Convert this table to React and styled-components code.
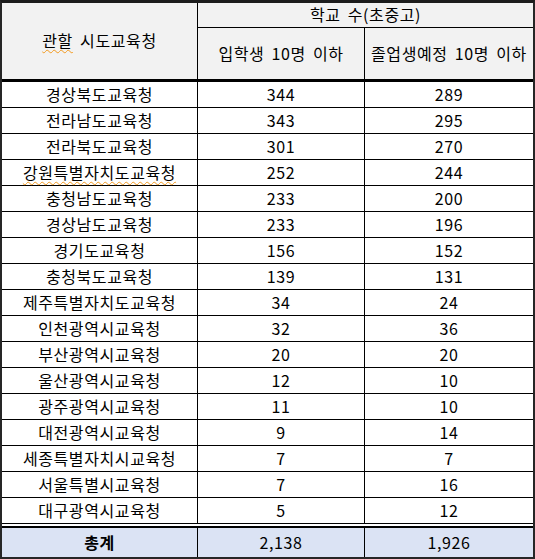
import React from "react";
import styled, { createGlobalStyle } from "styled-components";

const GlobalStyle = createGlobalStyle`
  html, body {
    margin: 0;
    padding: 0;
    background: #ffffff;
  }
  body {
    font-family: "Noto Sans CJK KR", "Noto Sans", sans-serif;
  }
`;

const rows = [
  ["경상북도교육청", "344", "289"],
  ["전라남도교육청", "343", "295"],
  ["전라북도교육청", "301", "270"],
  ["강원특별자치도교육청", "252", "244", true],
  ["충청남도교육청", "233", "200"],
  ["경상남도교육청", "233", "196"],
  ["경기도교육청", "156", "152"],
  ["충청북도교육청", "139", "131"],
  ["제주특별자치도교육청", "34", "24"],
  ["인천광역시교육청", "32", "36"],
  ["부산광역시교육청", "20", "20"],
  ["울산광역시교육청", "12", "10"],
  ["광주광역시교육청", "11", "10"],
  ["대전광역시교육청", "9", "14"],
  ["세종특별자치시교육청", "7", "7"],
  ["서울특별시교육청", "7", "16"],
  ["대구광역시교육청", "5", "12"],
];

const Frame = styled.div`
  box-sizing: border-box;
  width: 535px;
  height: 559px;
  background: #ffffff;
  border-top: 3px solid #1c1c1c;
  border-left: 2px solid #262626;
  border-right: 2px solid #262626;
  border-bottom: 2px solid #262626;
  display: flex;
  flex-direction: column;
  color: #000;
  font-size: 16px;
  letter-spacing: 0.6px;
  word-spacing: 3px;
`;

const Header = styled.div`
  display: grid;
  grid-template-columns: 196px 167px 168px;
  grid-template-rows: 25px 51px;
  background: #f2f2f2;
  border-bottom: 3px solid #000;
`;

const Cell = styled.div`
  box-sizing: border-box;
  display: flex;
  align-items: center;
  justify-content: center;
  white-space: nowrap;
  line-height: 1;
  padding-bottom: 2px;
  border-right: ${(p) => (p.$last ? "none" : "1px solid #000")};
  border-bottom: ${(p) => (p.$under ? "1px solid #000" : "none")};
  font-weight: ${(p) => (p.$bold ? 700 : 400)};
`;

const RegionHead = styled(Cell)`
  grid-row: 1 / span 2;
`;

const GroupHead = styled(Cell)`
  grid-column: 2 / span 2;
`;

const Body = styled.div`
  display: flex;
  flex-direction: column;
`;

const Row = styled.div`
  display: grid;
  grid-template-columns: 196px 167px 168px;
  height: 26px;
  border-bottom: 1px solid #000;
  box-sizing: border-box;
`;

const TotalRow = styled.div`
  display: grid;
  grid-template-columns: 196px 167px 168px;
  margin-top: 2px;
  border-top: 2px solid #000;
  background: #dbe3f4;
  flex: 1;
`;

const Spell = styled.span`
  text-decoration: underline wavy #f29a1f;
  text-decoration-thickness: 1px;
  text-underline-offset: 2px;
`;

export default function App() {
  return (
    <>
      <GlobalStyle />
      <Frame>
        <Header>
          <RegionHead>
            <span>
              <Spell>관할</Spell> 시도교육청
            </span>
          </RegionHead>
          <GroupHead $last $under>
            학교 수(초중고)
          </GroupHead>
          <Cell>입학생 10명 이하</Cell>
          <Cell $last>졸업생예정 10명 이하</Cell>
        </Header>
        <Body>
          {rows.map(([name, a, b, spell]) => (
            <Row key={name}>
              <Cell>{spell ? <Spell>{name}</Spell> : name}</Cell>
              <Cell>{a}</Cell>
              <Cell $last>{b}</Cell>
            </Row>
          ))}
        </Body>
        <TotalRow>
          <Cell $bold>총계</Cell>
          <Cell>2,138</Cell>
          <Cell $last>1,926</Cell>
        </TotalRow>
      </Frame>
    </>
  );
}
